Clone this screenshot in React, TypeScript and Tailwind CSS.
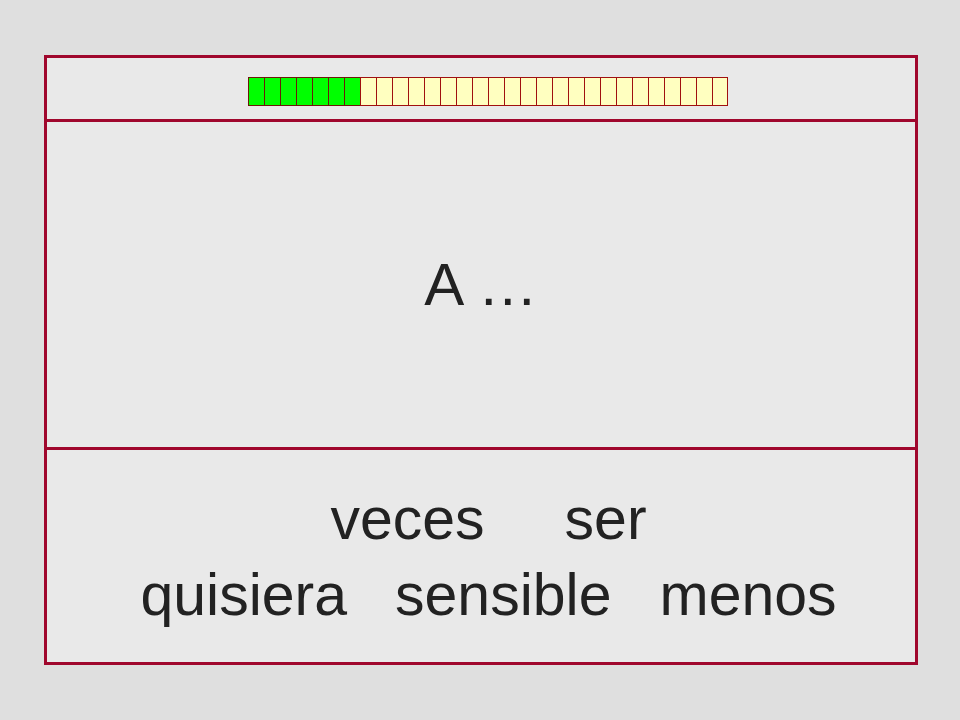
import React from 'react';

export default function App() {
  const total = 30;
  const done = 7;
  const cells = Array.from({ length: total }, (_, i) => i < done);

  return (
    <div className="w-[960px] h-[720px] bg-[#dfdfdf] pt-[55px] pl-[44px]" style={{ fontFamily: '"Liberation Sans", Arial, sans-serif' }}>
      <div className="w-[874px] h-[610px] border-[3px] border-[#a0072d] bg-[#e9e9e9] flex flex-col">
        {/* progress */}
        <div className="h-[64px] border-b-[3px] border-[#a0072d] flex items-start pt-[19px] pl-[201px]">
          <div className="flex">
            {cells.map((ok, i) => (
              <div
                key={i}
                className={
                  ok
                    ? 'w-[16px] h-[29px] bg-[#00ff00] border-y border-l border-[#6b1a08]'
                    : 'w-[16px] h-[29px] bg-[#ffffc0] border-y border-l border-[#a01010] last:border-r'
                }
              />
            ))}
          </div>
        </div>

        {/* question */}
        <div className="h-[328px] border-b-[3px] border-[#a0072d] flex items-center justify-center">
          <span className="text-[60px] text-[#222] leading-none">A …</span>
        </div>

        {/* words */}
        <div className="flex-1 flex flex-col items-center justify-center gap-[12px] pt-[2px] pl-[15px]">
          <div className="flex gap-[80px] text-[59px] text-[#222] leading-[64px]">
            <span>veces</span>
            <span>ser</span>
          </div>
          <div className="flex gap-[48px] text-[59px] text-[#222] leading-[64px]">
            <span>quisiera</span>
            <span>sensible</span>
            <span>menos</span>
          </div>
        </div>
      </div>
    </div>
  );
}
